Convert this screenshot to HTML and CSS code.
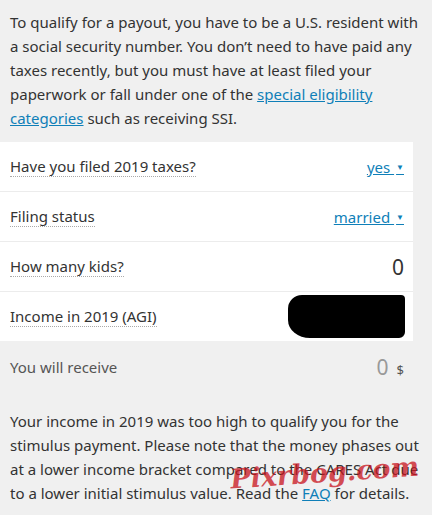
FILE: index.html
```html
<!DOCTYPE html>
<html lang="en">
<head>
    <meta charset="UTF-8">
    <title>Stimulus Calculator</title>
    <link rel="stylesheet" href="styles.css">
</head>
<body>
    <div id="calc">
        <p class="intro">
            To qualify for a payout, you have to be a U.S. resident with a social security number. You don’t need to have paid any taxes recently, but you must have at least filed your paperwork or fall under one of the <a href="#">special eligibility categories</a> such as receiving SSI.
        </p>

        <div class="card">
            <div class="row">
                <span class="label">Have you filed 2019 taxes?</span>
                <span class="select">yes <span class="caret">▼</span></span>
            </div>
            <div class="row">
                <span class="label">Filing status</span>
                <span class="select">married <span class="caret">▼</span></span>
            </div>
            <div class="row">
                <span class="label">How many kids?</span>
                <span class="number">0</span>
            </div>
            <div class="row">
                <span class="label">Income in 2019 (AGI)</span>
                <span class="redacted"></span>
            </div>
        </div>

        <div class="result">
            <span>You will receive</span>
            <span class="amount"><span class="zero">0</span><span class="dollar">$</span></span>
        </div>

        <p class="note">
            Your income in 2019 was too high to qualify you for the stimulus payment. Please note that the money phases out at a lower income bracket compared to the CARES Act due to a lower initial stimulus value. Read the <a href="#">FAQ</a> for details.
        </p>

        <div class="watermark">Pixrbog.com</div>
    </div>
</body>
</html>
```

FILE: styles.css
```css
body, html {
    margin: 0;
    padding: 0;
}

body {
    font-family: "Noto Sans", "Open Sans", sans-serif;
    background-color: #f0f0f0;
    color: #333;
    font-size: 15px;
}

#calc {
    position: relative;
    width: 432px;
    height: 515px;
    overflow: hidden;
}

a {
    color: #0f7fb8;
}

.intro {
    margin: 0;
    padding: 10px 8px 12px 10px;
    line-height: 24px;
}

.card {
    background-color: #fff;
    width: 413px;
}

.row {
    display: flex;
    justify-content: space-between;
    align-items: center;
    height: 49px;
    padding: 0 9px 0 10px;
    border-bottom: 1px solid #ececec;
}

.row:last-child {
    border-bottom: none;
}

.label {
    border-bottom: 1px dotted #aaa;
    line-height: 20px;
}

.select {
    color: #0f7fb8;
    text-decoration: underline;
}

.caret {
    font-size: 8px;
    vertical-align: 3px;
    margin-left: 2px;
}

.number {
    font-size: 21px;
}

.redacted {
    width: 117px;
    height: 43px;
    margin-right: -1px;
    background-color: #000;
    border-radius: 14px 4px 6px 22px / 14px 4px 6px 18px;
}

.result {
    display: flex;
    justify-content: space-between;
    align-items: center;
    height: 52px;
    padding: 0 28px 0 10px;
    color: #555;
}

.zero {
    font-size: 21px;
    color: #999;
    margin-right: 8px;
}

.dollar {
    font-size: 13px;
    color: #555;
}

.note {
    margin: 0;
    padding: 16px 8px 0 10px;
    line-height: 24px;
}

.watermark {
    position: absolute;
    left: 230px;
    top: 457px;
    font-family: "DejaVu Serif", serif;
    font-style: italic;
    font-weight: bold;
    font-size: 27px;
    color: rgba(200, 20, 30, 0.75);
    transform: rotate(-4deg);
}
```
